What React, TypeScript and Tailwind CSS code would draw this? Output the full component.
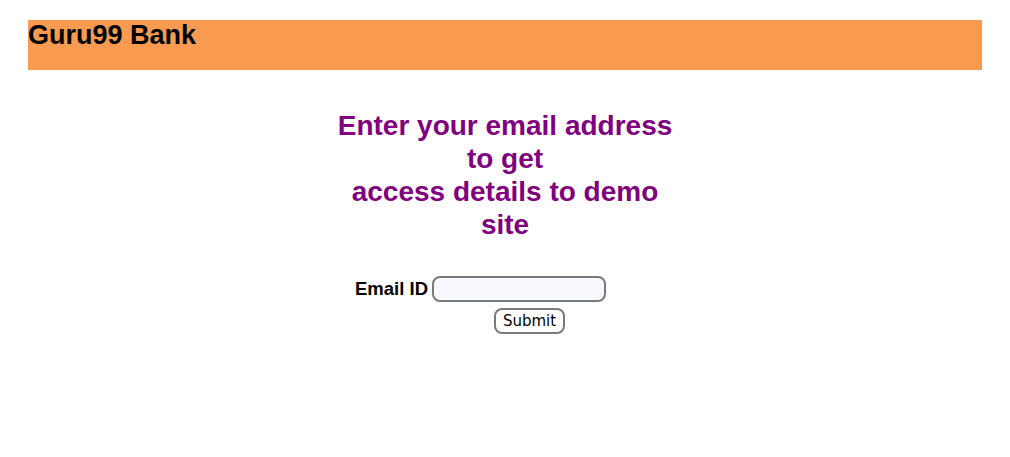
import React from "react";

export default function App() {
  return (
    <div className="min-h-[457px] w-full bg-white pt-[20px]" style={{ fontFamily: '"Liberation Sans", Arial, sans-serif' }}>
      <div className="mx-[28px] h-[50px] bg-[#f89b50]">
        <h2 className="m-0 text-[27px] font-bold leading-[31px] text-black">Guru99 Bank</h2>
      </div>
      <h2 className="mt-[39px] text-center text-[28px] font-bold leading-[33px] text-[#800080]">
        Enter your email address
        <br />
        to get
        <br />
        access details to demo
        <br />
        site
      </h2>
      <div className="mx-auto mt-[35px] w-[300px]">
        <div className="flex items-center gap-[4px]">
          <label className="text-[18.5px] font-bold leading-[20px] text-black">Email ID</label>
          <input
            type="text"
            className="h-[26px] w-[174px] rounded-[8px] border-2 border-[#7a7a7a] bg-[#f8f8ff] px-1 outline-none"
          />
        </div>
        <div className="mt-[6px] pl-[139px]">
          <button
            className="flex h-[26px] w-[71px] items-center justify-center rounded-[8px] border-2 border-[#7a7a7a] bg-white text-[15px] text-black"
            style={{ fontFamily: '"DejaVu Sans", Tahoma, sans-serif' }}
          >
            Submit
          </button>
        </div>
      </div>
    </div>
  );
}
